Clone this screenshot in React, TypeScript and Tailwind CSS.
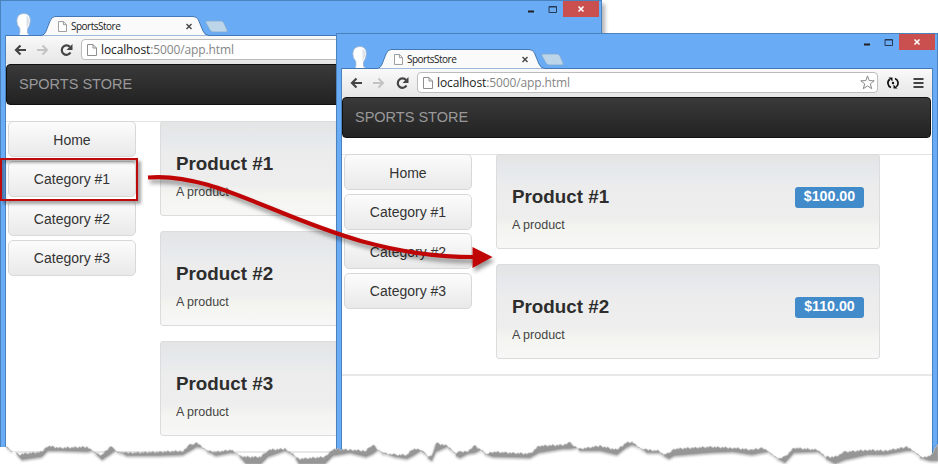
import { ReactNode } from "react";

const categories = ["Home", "Category #1", "Category #2", "Category #3"];

function PageIcon({ className }: { className: string }) {
  return (
    <svg className={className} viewBox="0 0 10 12" fill="#fff" stroke="#8e8e8e">
      <path d="M.5.5h5.5l3.5 3.5v7.5h-9z" />
      <path d="M6 .5v3.5h3.5" fill="none" />
    </svg>
  );
}

function TitleBar() {
  return (
    <div className="relative h-[35px]">
      <svg className="absolute inset-0" width="602" height="36">
        <path d="M19 35.500q1.500-3 .8-7q-3.300-4-3-8q.4-7 7.200-7q6.500 0 6.300 7.500q0 4.500-2.800 8v4q1 1.500 2.500 2.500z" fill="#fff" stroke="#9db4cc" strokeWidth=".8" />
        <path d="M26.500 15.500q3 2 2.800 6q-.3 4-2.800 6.500z" fill="#dde3ea" />
        <path d="M6 36V35.500H41Q45 35 46.500 30L50 21Q52 16.500 55 16.500H193Q197 16.500 198.500 20L203 31Q205 35.500 209 35.500H596V36Z" fill="#fafafa" stroke="#4479b5" />
        <path d="M207 21h14q2 0 3 2l3 7q1 2-1 2h-13q-2 0-3-2l-4-7q-1-2 1-2z" fill="#bdd5e8" stroke="#80a9d0" strokeWidth=".8" />
        <path d="m186.500 24 5 5m0-5-5 5" stroke="#444" strokeWidth="1.400" />
        <path d="M528 11.500h6" stroke="#202020" strokeWidth="2" />
        <path d="M549 6.500h7.500v6h-7.500zM549 7h7.500" fill="none" stroke="#263a54" />
        <path d="M563 1h36v16h-36z" fill="#c9504f" />
        <path d="m578.500 6.500 5 5m0-5-5 5" stroke="#fff" strokeWidth="1.600" />
      </svg>
      <div className="relative flex items-center pt-[19px] pl-[58px] text-[10px] leading-[14px] text-[#222]">
        <PageIcon className="mr-[4px] h-[11px] w-[9px]" />
        <span className="font-['Open_Sans','Noto_Sans',sans-serif] text-[10px] tracking-[-0.5px]">SportsStore</span>
      </div>
    </div>
  );
}

function Toolbar() {
  return (
    <div className="flex h-[29px] items-center bg-gradient-to-b from-[#fafafa] to-[#e6e6e6] pl-2">
      <svg className="h-[14px] w-[64px] shrink-0" viewBox="0 0 64 14" fill="none" strokeWidth="2">
        <path d="M12 7H2m4.500-4.500L2 7l4.500 4.500" stroke="#444" strokeWidth="2.200" />
        <path d="M23 7h10m-4.500-4.500L33 7l-4.500 4.500" stroke="#c3c3c3" />
        <path d="M56.500 9.500A4.700 4.700 0 1 1 56 4" stroke="#444" strokeWidth="2.200" />
        <path d="M58.500 1v6h-6z" fill="#444" />
      </svg>
      <div className="ml-[3px] flex h-[21px] w-[461px] items-center rounded-sm border border-[#bcbcbc] bg-white pr-[2px] pl-[5px]">
        <PageIcon className="mr-[4px] h-[12px] w-[10px] shrink-0" />
        <span className="grow font-['Open_Sans','Noto_Sans',sans-serif] text-[12px] leading-[18px] tracking-[-0.12px] text-[#858585]">
          <span className="text-[#222]">localhost</span>:5000/app.html
        </span>
        <svg width="15" height="15" viewBox="0 0 15 15" fill="#fff" stroke="#888">
          <path d="m7.500.900 1.700 4.700 5 .2-3.900 3.100 1.400 4.800-4.200-2.800-4.200 2.800 1.400-4.800L.8 5.800l5-.2z" />
        </svg>
      </div>
      <svg className="ml-[8px]" width="40" height="14" viewBox="0 0 40 14" fill="none">
        <path d="M5 11.500A4.800 4.800 0 0 1 3.800 3.200M9 2.500A4.800 4.800 0 0 1 10.200 10.800" stroke="#111" strokeWidth="1.700" />
        <path d="M2.500 1.500h4v4zM11.500 12.500h-4v-4z" fill="#111" />
        <circle cx="7" cy="7" r="1.200" fill="#111" />
        <path d="M27.500 3h10M27.500 7h10M27.500 11h10" stroke="#444" strokeWidth="2.200" />
      </svg>
    </div>
  );
}

function Product({ n, price }: { n: number; price: string }) {
  return (
    <div className="h-[95px] w-[384px] rounded-[3px] border border-[#dcdcdc] bg-linear-[to_bottom,#e4e4e4_0%,#e5e9ed_18%,#ececec_34%,#eeeeee_68%,#f4f5f0_78%,#f7f7f7_100%] px-[15px] pt-[30px]">
      <div className="flex h-6 items-center justify-between">
        <h3 className="text-[18.800px] leading-6 font-bold text-[#2d2d2d]">Product #{n}</h3>
        <span className="flex h-[21px] w-[69px] items-center justify-center rounded-[3px] bg-[#428bca] text-[14.200px] font-bold text-white">{price}</span>
      </div>
      <p className="mt-[8px] text-[12.500px] leading-4 text-[#444]">A product</p>
    </div>
  );
}

function BrowserWindow({ children }: { children: ReactNode }) {
  return (
    <div className="h-[464px] w-[602px] border-t border-[#4a82bd] bg-[#6aabf5] shadow-[3px_4px_4px_rgba(0,0,0,0.3)]">
      <div className="-mt-px h-full border-x border-[#4a82bd]">
        <div className="-mx-px">
          <TitleBar />
          <div className="mx-[5px] h-[429px] overflow-hidden border-x border-[#4a82bd] bg-white">
            <Toolbar />
            <div className="flex h-[41px] w-[589px] items-center rounded border border-[#111] bg-gradient-to-b from-[#3a3a3a] to-[#222] pl-3 text-[14.500px] text-[#999]">
              SPORTS STORE
            </div>
            <div className="mt-[16px] border-t border-[#e2e2e2]">
              <div className="-mt-px flex items-start pl-[2px]">
                <nav className="flex w-[128px] shrink-0 flex-col gap-[3.500px]">
                  {categories.map((name) => (
                    <button key={name} className="h-9 rounded-[5px] border border-[#d8d8d8] bg-gradient-to-b from-[#fcfcfc] to-[#e9e9e9] pt-[2px] text-[14px] text-[#333]">
                      {name}
                    </button>
                  ))}
                </nav>
                <main className="ml-[24px] flex flex-col gap-[15px]">{children}</main>
              </div>
              <div className="mt-[15px] h-[2px] bg-[#e8e8e8]" />
            </div>
          </div>
        </div>
      </div>
    </div>
  );
}

// Each run of torn paper lists x, upper edge and lower edge.
const tears: number[][][] = [
  [[6, 447, 447], [12, 451, 452]],
  [[16, 453, 453], [19, 455, 457], [22, 454, 460], [42, 452, 457], [48, 446, 451], [60, 448, 451], [87, 447, 452], [92, 451, 451], [98, 455, 455]],
  [[96, 454, 454], [102, 455, 460], [111, 446, 454], [115, 451, 451], [121, 453, 453]],
  [[119, 452, 452], [127, 453, 456], [160, 452, 456], [183, 451, 455], [190, 445, 451], [197, 443, 447], [203, 448, 448], [210, 453, 453]],
  [[207, 451, 451], [216, 452, 456], [231, 450, 453], [237, 454, 454], [242, 458, 458]],
  [[240, 456, 457], [246, 457, 464], [261, 457, 464], [268, 450, 457], [285, 449, 451], [291, 453, 454], [298, 459, 459]],
  [[296, 458, 459], [299, 459, 464], [325, 457, 464], [333, 449, 456], [350, 450, 453], [366, 451, 457], [373, 444, 454], [378, 450, 450], [384, 454, 454]],
  [[382, 453, 453], [395, 455, 457], [407, 455, 459], [413, 449, 456], [421, 450, 451], [425, 454, 454], [429, 458, 458]],
  [[428, 457, 458], [432, 456, 461], [436, 443, 452], [447, 446, 447], [456, 454, 454]],
  [[456, 454, 456], [460, 452, 458], [468, 451, 454], [475, 446, 453], [481, 450, 450], [487, 455, 455]],
  [[487, 454, 455], [493, 452, 457], [530, 454, 458], [539, 446, 453], [563, 445, 449], [570, 443, 449], [577, 448, 448]],
  [[577, 448, 448], [580, 449, 451], [600, 446, 451], [617, 450, 455], [626, 443, 448], [632, 442, 445], [638, 447, 447], [643, 450, 450]],
  [[642, 449, 449], [647, 450, 453], [659, 451, 453], [665, 456, 456]],
  [[664, 454, 456], [669, 453, 459], [674, 449, 456], [710, 447, 453], [733, 448, 452], [752, 450, 455], [762, 448, 453], [769, 452, 452], [779, 460, 460]],
  [[778, 459, 459], [785, 457, 463], [794, 448, 453], [818, 450, 452], [826, 458, 458]],
  [[826, 457, 459], [835, 457, 464], [845, 452, 460], [868, 450, 455], [885, 451, 455], [907, 447, 451], [913, 451, 451], [921, 457, 457]],
  [[920, 457, 458], [930, 457, 461], [935, 449, 461], [938, 444, 461]],
];

function ragged(run: number[][]) {
  const out: string[] = [];
  run.slice(1).forEach(([x2, y2], i) => {
    const [x1, y1] = run[i];
    const steps = Math.max(1, Math.floor((x2 - x1) / 1.5));
    for (let s = 0; s < steps; s++) {
      const t = s / steps;
      const bump = i + s === 0 ? 0 : ((Math.round(x1) * 3 + s * 7) % 5) * 0.45 - 0.9;
      out.push(`${x1 + (x2 - x1) * t},${y1 + (y2 - y1) * t + bump}`);
    }
  });
  const last = run[run.length - 1];
  out.push(`${last[0]},${last[1]}`);
  return out.join(" ");
}

function TornEdge() {
  const top = tears.map(ragged).join(" ");
  return (
    <svg className="absolute inset-0" width="938" height="464">
      <polygon points={`0,447 ${top} 938,464 0,464`} fill="#fff" />
      {tears.map((run, i) => {
        const bottom = [...run].reverse().map(([x, , y]) => `${x},${y}`).join(" ");
        return (
          <polygon key={i} points={`${ragged(run)} ${bottom}`} fill="#969696" stroke="#c0c0c0" strokeOpacity=".6" className="drop-shadow-[0_1px_1px_rgba(0,0,0,0.3)]" />
        );
      })}
    </svg>
  );
}

export default function App() {
  return (
    <div className="relative h-[464px] w-[938px] overflow-hidden bg-white font-['Liberation_Sans',Arial,sans-serif]">
      <div className="absolute top-0 left-0">
        <BrowserWindow>
          <Product n={1} price="$100.00" />
          <Product n={2} price="$110.00" />
          <Product n={3} price="$120.00" />
        </BrowserWindow>
      </div>
      <div className="absolute top-[33px] left-[336px]">
        <BrowserWindow>
          <Product n={1} price="$100.00" />
          <Product n={2} price="$110.00" />
        </BrowserWindow>
      </div>
      <TornEdge />
      <div className="absolute top-[158px] left-0 h-[43px] w-[138px] border-2 border-[#bd0a0a] shadow-[3px_3px_3px_rgba(0,0,0,0.35),inset_3px_3px_3px_rgba(0,0,0,0.3)]" />
      <svg className="absolute inset-0 drop-shadow-[2px_4px_2px_rgba(0,0,0,0.4)]" width="938" height="464">
        <path d="M148 177.500C235 170 320 257 474 257" fill="none" stroke="#bf0505" strokeWidth="4.200" />
        <path d="m472.500 247 20 10-20 11z" fill="#bf0505" />
      </svg>
    </div>
  );
}
